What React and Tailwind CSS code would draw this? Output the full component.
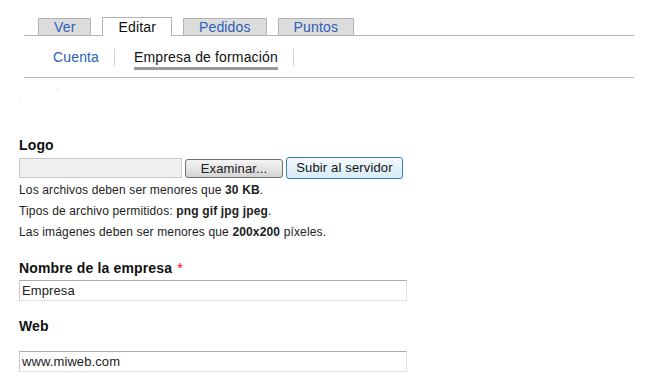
import React from 'react';

const tabs = [
  { label: 'Ver', active: false },
  { label: 'Editar', active: true },
  { label: 'Pedidos', active: false },
  { label: 'Puntos', active: false },
];

function Field({ label, required, value, gap }) {
  return (
    <>
      <div className={`${gap} h-[16px] text-[14px] leading-[16px] font-bold text-[#111]`}>
        {label}
        {required && <span className="ml-[5px] font-normal text-[#ff0000]">*</span>}
      </div>
      <input
        type="text"
        defaultValue={value}
        className="block h-[21px] w-[388px] border border-[#dbdfe6] border-t-[#abadb3] border-l-[#c7cbd2] bg-white pl-[2px] text-[13px] tracking-[0.1px] text-[#222] outline-none"
      />
    </>
  );
}

export default function App() {
  return (
    <div className="h-[391px] w-[655px] overflow-hidden bg-white font-['Liberation_Sans',Arial,sans-serif] tracking-[0.15px]">
      {/* Main tabs */}
      <div className="ml-[24px] w-[610px] pt-[17px]">
        <ul className="flex h-[19px] items-end gap-[11px] border-b border-[#b4b4b4] pl-[14px]">
          {tabs.map((t) =>
            t.active ? (
              <li
                key={t.label}
                className="-mb-px h-[19px] border border-b-0 border-[#b4b4b4] bg-white px-[15px] pt-px text-[14px] leading-[16px] text-[#111]"
              >
                {t.label}
              </li>
            ) : (
              <li
                key={t.label}
                className="h-[17px] border border-b-0 border-[#b4b4b4] bg-[#dcdcdc] px-[15px] text-[14px] leading-[16px] text-[#2b5fb8]"
              >
                {t.label}
              </li>
            )
          )}
        </ul>

        {/* Secondary tabs */}
        <div className="flex h-[42px] items-start border-b border-[#bababa] pl-[29px] pt-[13px]">
          <span className="mr-[15px] text-[14px] leading-[17px] text-[#2b5fb8]">Cuenta</span>
          <span className="h-[17px] w-px bg-[#d4d4d4]" />
          <div className="ml-[19px] mr-[15px] flex flex-col">
            <span className="text-[14px] leading-[17px] text-[#111]">Empresa de formación</span>
            <span className="mt-[1px] h-[3px] bg-[#9a9a9a]" />
          </div>
          <span className="h-[17px] w-px bg-[#d4d4d4]" />
        </div>
      </div>

      {/* stray marks */}
      <div className="ml-[57px] mt-[11px] h-px w-[3px] bg-[#e4e4e4]" />
      <div className="ml-[19px] mt-[11px] h-px w-px bg-[#e9c9a4]" />

      {/* Form */}
      <div className="pl-[19px]">
        <div className="mt-[35px] h-[16px] text-[14px] leading-[16px] font-bold text-[#111]">Logo</div>
        <div className="mt-[4px] flex h-[22px] items-center gap-[3px]">
          <div className="h-[20px] w-[163px] border border-[#cacaca] bg-[#f0f0f0]" />
          <button className="h-[19px] w-[98px] rounded-[3px] border border-[#707070] bg-linear-to-b from-[#f4f4f4] to-[#d4d4d4] text-[13px] leading-[15px] text-[#222]">
            Examinar...
          </button>
          <button className="h-[22px] w-[117px] rounded-[3px] border border-[#3c7fb1] bg-linear-to-b from-[#f3f9fd] to-[#d8ebf8] text-[13px] leading-[18px] text-[#111]">
            Subir al servidor
          </button>
        </div>
        <div className="mt-[1px] text-[12px] leading-[21px] text-[#222]">
          <div>
            Los archivos deben ser menores que <b>30 KB</b>.
          </div>
          <div>
            Tipos de archivo permitidos: <b>png gif jpg jpeg</b>.
          </div>
          <div>
            Las imágenes deben ser menores que <b>200x200</b> píxeles.
          </div>
        </div>

        <Field label="Nombre de la empresa" required value="Empresa" gap="mt-[17px] mb-[4px]" />
        <Field label="Web" value="www.miweb.com" gap="mt-[17px] mb-[17px]" />
      </div>
    </div>
  );
}
